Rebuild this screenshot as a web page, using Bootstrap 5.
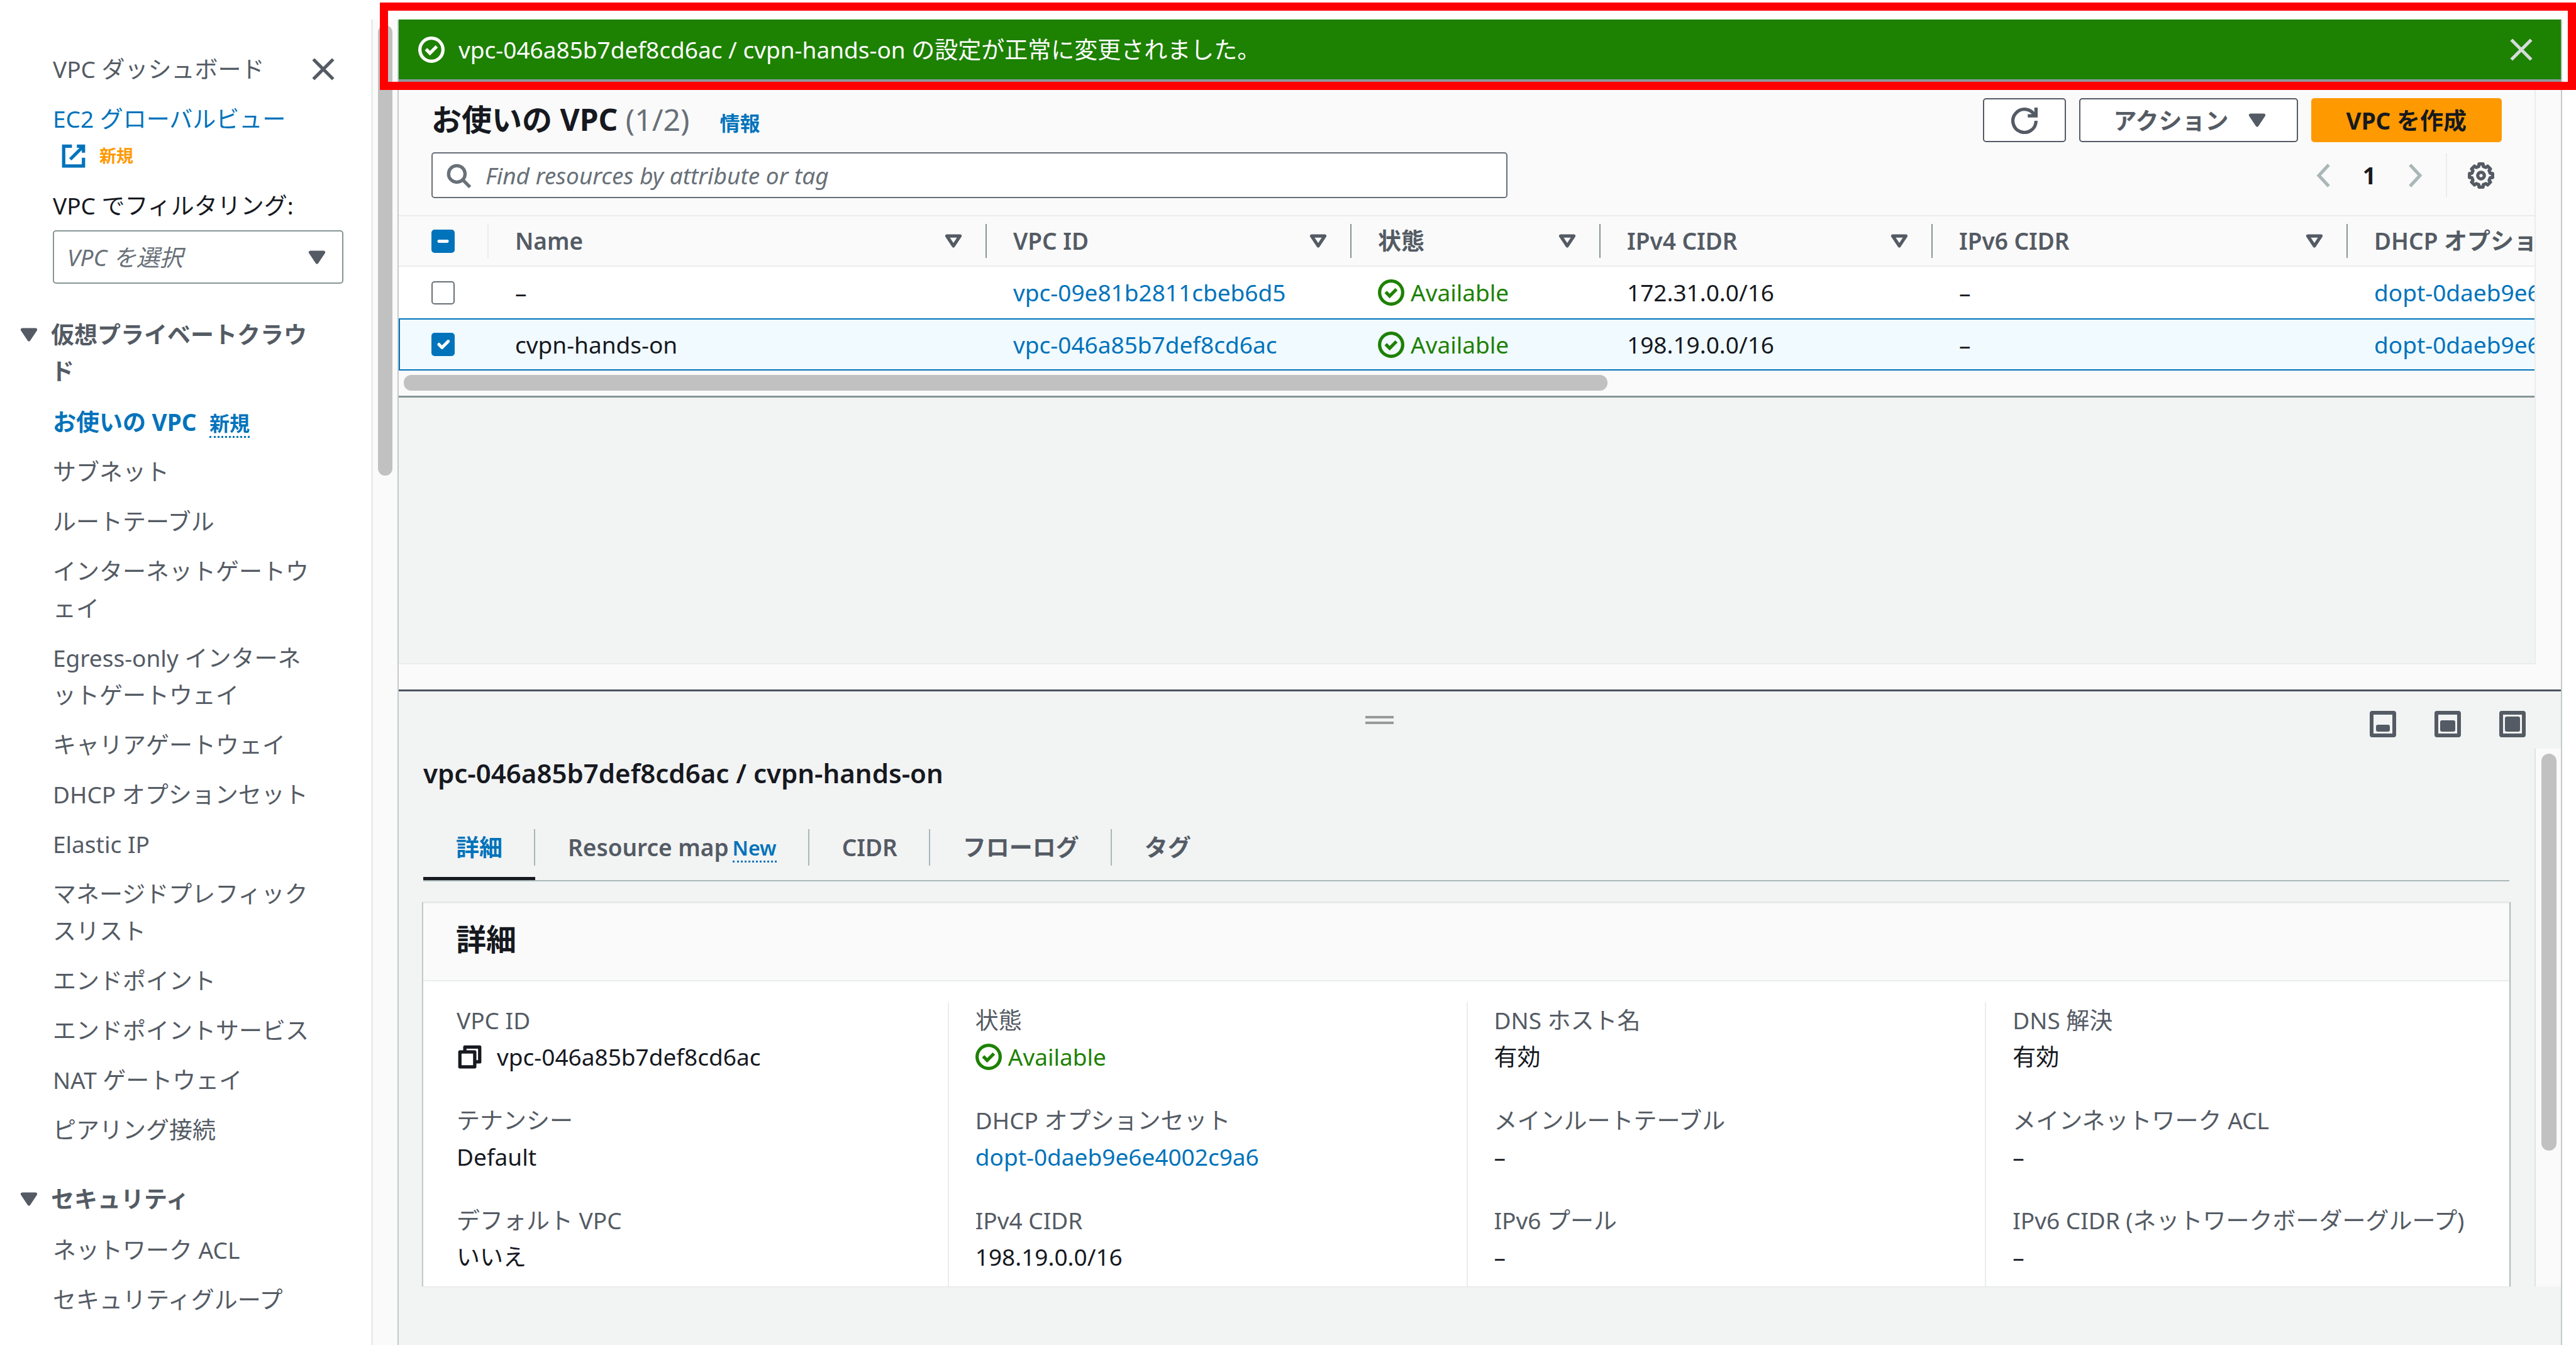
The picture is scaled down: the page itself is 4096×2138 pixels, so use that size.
<!DOCTYPE html>
<html lang="ja">
<head>
<meta charset="utf-8">
<meta name="viewport" content="width=device-width, initial-scale=1">
<title>VPC コンソール</title>
<link rel="stylesheet" href="https://cdn.jsdelivr.net/npm/bootstrap@5.3.0/dist/css/bootstrap.min.css">
<style>
:root{--ink:#16191f;--soft:#545b64;--mute:#687078;--link:#0073bb;--ok:#1d8102;--pane:#fafafa;--canvas:#f2f3f3;--hair:#eaeded;--edge:#aab7b8}
body{height:100vh;overflow:hidden;background:#fff;color:var(--ink);font-family:"Noto Sans","Noto Sans CJK JP",sans-serif;font-size:37px;line-height:58px;line-break:normal}
a{color:var(--link);text-decoration:none}
.ico{width:42px;height:42px;flex:none;fill:none;stroke:currentColor;stroke-width:2}
.ico .solid{fill:currentColor}
.bare{border:0;background:none;padding:0;color:var(--soft);line-height:1;display:flex}
.bar-thumb{background:#c1c1c1;border-radius:12px}
.workspace{padding-top:31px}

/* navigation */
.side{width:590px;padding:50px 44px 0 84px;color:var(--soft)}
.side-top{margin-bottom:20px}
.side-top .bare{margin-right:11px}
.side ul{list-style:none;margin:0;padding:0 36px 0 0}
.side li{line-height:59px;margin-bottom:20px}
.side li a{color:var(--soft)}
.side .here a{color:var(--link);font-weight:700}
.side .ext{color:var(--link);display:block;line-height:59px}
.ext-note{line-height:59px;margin-bottom:20px;padding-left:12px;gap:20px}
.ext-note .ico{color:var(--link)}
.side h2{font-size:37px;line-height:58px;font-weight:700;margin:52px 0 22px -59px;padding-right:36px;gap:14px}
.tag-new{font-size:32px;font-weight:600;color:var(--link);border-bottom:3px dotted var(--link);line-height:40px;display:inline-block}
.side .tag-new{margin-left:11px}
.tag-orange{font-size:27px;font-weight:700;color:#ff9900}
.pick-label{color:var(--ink);display:block;line-height:59px;margin-bottom:10px}
.picker{height:85px;border:2px solid #879596;border-radius:5px;font-size:37px;font-style:italic;color:var(--mute);padding:0 60px 0 21px;background-size:42px;background-position:right 19px center;background-image:url("data:image/svg+xml,%3Csvg xmlns='http://www.w3.org/2000/svg' viewBox='0 0 16 16'%3E%3Cpath d='M4 5h8l-4 6z' fill='%23545b64' stroke='%23545b64' stroke-width='2' stroke-linejoin='round'/%3E%3C/svg%3E")}
.side-track{width:42px;background:var(--pane);border-left:3px solid var(--hair);padding:9px 8px 0 8px}
.side-track .bar-thumb{height:716px}

/* main column */
.stage{margin-right:22px;border:solid #c3cacb;border-width:0 2px;min-width:0}
.flash{background:var(--ok);color:#fff;height:95px;padding:0 42px 0 31px;gap:22px;box-shadow:0 4px 1px #8d9a9f;z-index:1}
.flash .bare{color:#d5dbdb}
.callout-frame{position:absolute;left:604px;right:0;top:4px;height:139px;border:13px solid #f00;pointer-events:none;z-index:5}
.upper{background:var(--pane);padding-bottom:40px}
.listing{border-right:2px solid var(--hair);border-bottom:2px solid var(--hair);background:var(--canvas);min-width:0}
.gutter{width:40px}
.list-head{background:var(--pane);padding:30px 52px 27px 52px}
.list-head h1{font-size:48px;line-height:68px;font-weight:700;margin:0}
.list-head h1 span{font-weight:400;color:var(--mute)}
.info{font-size:32px;font-weight:700}
.actions{gap:21px}
.act{height:70px;border:2px solid var(--soft);border-radius:5px;background:#fff;color:var(--soft);font-weight:700;font-size:37px;line-height:1;padding:0 52px}
.act.menu-act{padding-right:42px}
.act.main-act{background:#ff9900;border-color:#ff9900;color:var(--ink);padding:0 54px}
.act.icon-act{padding:0 43px}
.finder{width:1711px;height:73px;border:2px solid var(--mute);border-radius:5px;background:#fff;padding-left:20px;gap:22px;color:var(--mute)}
.finder input{border:0;padding:0;font-size:37px;line-height:58px;background:none;box-shadow:none!important}
.finder input::placeholder{color:var(--mute);font-style:italic;opacity:1}
.pager{padding-right:12px}
.page-no{padding:0 41px}
.pager .vline{width:2px;height:70px;background:var(--hair);margin:0 33px 0 28px}
.pager .off{color:var(--edge)}

.grid-wrap{overflow:hidden;background:#fff}
.vpcs{table-layout:fixed;width:6000px;border-collapse:separate;border-spacing:0;margin:0}
.vpcs th{height:82px;padding:0;background:var(--pane);border:solid var(--hair);border-width:2px 0;color:var(--soft);font-weight:600}
.vpcs th>div{height:54px;border-right:2px solid #879596;padding:0 30px 0 42px}
.vpcs th:first-child>div{border-color:var(--hair);padding-left:52px}
.vpcs td{height:82px;padding:0 42px;white-space:nowrap;vertical-align:middle}
.vpcs td:first-child{padding-left:52px}
.vpcs tr.picked td{height:83px;background:#f1faff;border:solid var(--link);border-width:2px 0}
.vpcs tr.picked td:first-child{border-left-width:2px;padding-left:50px}
.tick{width:37px;height:37px;margin:0;border:2px solid var(--mute);border-radius:5px!important;display:block;float:none}
.vpcs .tick:checked,.vpcs .tick:indeterminate{background-color:var(--link);border-color:var(--link)}
.ok-state{color:var(--ok);gap:10px}
.h-track{background:var(--pane);height:43px;border-bottom:3px solid #879596;padding:7px 8px 0}
.h-track .bar-thumb{width:1914px;height:25px}

/* split panel */
.split{background:var(--canvas);border-top:3px solid #4a525c;padding-bottom:93px}
.grip{width:45px;height:13px;border:solid #999;border-width:4px 0}
.panel-bar{height:91px;padding-right:56px}
.panel-sizes{gap:61px;padding:12px 0 0 16px}
.detail-pane{padding:10px 40px 0 39px;min-width:0;border-right:2px solid #e0e3e3}
.detail-pane h2{font-size:42px;line-height:58px;font-weight:600;margin:0 0 60px}
.detail-tabs{border-bottom:2px solid var(--edge)}
.detail-tabs button{border:0;background:none;color:var(--soft);font-weight:600;padding:0 0 23px;line-height:58px}
.detail-tabs .cell{display:flex;gap:6px;align-items:center;height:58px;padding:0 50px 0 52px;border-right:2px solid var(--edge)}
.detail-tabs li:last-child .cell{border:0}
.detail-tabs .tag-new{margin-top:5px}
.detail-tabs .active{color:var(--link);font-weight:700;border-bottom:5px solid var(--ink);padding-bottom:18px}
.sheet{margin-top:33px;background:#fff;box-shadow:-2px 0 1px #c3cacb,2px 0 1px #b4bebf}
.sheet-top{background:var(--pane);border-top:2px solid var(--hair);border-bottom:2px solid var(--hair);padding:28px 52px 36px}
.sheet-top h3{font-size:48px;line-height:58px;font-weight:700;margin:0}
.facts{padding:33px 9px 0}
.facts dl{margin:0;padding:0 42px 18px;border-left:2px solid var(--hair)}
.facts .col:first-child dl{border-color:transparent}
.facts dt{font-weight:400;color:var(--soft)}
.facts dd{margin:0 0 43px;min-height:58px}
.facts dd:last-child{margin:0}
.copy-line{gap:22px}
.copy-line .bare{color:var(--ink)}
.detail-track{width:40px;background:var(--pane);padding:8px 7px 0 9px}
.detail-track .bar-thumb{height:631px}
</style>
</head>
<body>
<div class="workspace d-flex h-100 position-relative">
  <nav class="side flex-shrink-0" aria-label="VPC">
    <div class="side-top d-flex justify-content-between align-items-center">
      <a href="#" class="text-reset">VPC ダッシュボード</a>
      <button class="bare" type="button" aria-label="閉じる"><svg class="ico" viewBox="0 0 16 16"><path d="m2 2 12 12M14 2 2 14"/></svg></button>
    </div>
    <a href="#" class="ext">EC2 グローバルビュー</a>
    <div class="ext-note d-flex align-items-center"><svg class="ico" viewBox="0 0 16 16"><path d="M10 2h4v4M6 10l8-8M14 9v5H2V2h5"/></svg><span class="tag-orange">新規</span></div>
    <label for="vpc-filter" class="pick-label">VPC でフィルタリング:</label>
    <select id="vpc-filter" class="form-select picker"><option>VPC を選択</option></select>
    <h2 class="d-flex"><svg class="ico mt-2" viewBox="0 0 16 16" stroke-linejoin="round"><path class="solid" d="M4 5h8l-4 6z"/></svg><span>仮想プライベートクラウド</span></h2>
    <ul>
      <li class="here"><a href="#">お使いの VPC</a> <span class="tag-new">新規</span></li>
      <li><a href="#">サブネット</a></li>
      <li><a href="#">ルートテーブル</a></li>
      <li><a href="#">インターネットゲートウェイ</a></li>
      <li><a href="#">Egress-only インターネットゲートウェイ</a></li>
      <li><a href="#">キャリアゲートウェイ</a></li>
      <li><a href="#">DHCP オプションセット</a></li>
      <li><a href="#">Elastic IP</a></li>
      <li><a href="#">マネージドプレフィックスリスト</a></li>
      <li><a href="#">エンドポイント</a></li>
      <li><a href="#">エンドポイントサービス</a></li>
      <li><a href="#">NAT ゲートウェイ</a></li>
      <li><a href="#">ピアリング接続</a></li>
    </ul>
    <h2 class="d-flex"><svg class="ico mt-2" viewBox="0 0 16 16" stroke-linejoin="round"><path class="solid" d="M4 5h8l-4 6z"/></svg><span>セキュリティ</span></h2>
    <ul>
      <li><a href="#">ネットワーク ACL</a></li>
      <li><a href="#">セキュリティグループ</a></li>
    </ul>
  </nav>
  <div class="side-track flex-shrink-0"><div class="bar-thumb"></div></div>

  <main class="stage flex-grow-1 d-flex flex-column">
    <div class="flash d-flex align-items-center position-relative flex-shrink-0" role="status">
      <svg class="ico" viewBox="0 0 16 16"><circle cx="8" cy="8" r="7"/><path d="m4.700 7.700 2.400 2.400L11.200 6"/></svg>
      <span class="flex-grow-1">vpc-046a85b7def8cd6ac / cvpn-hands-on の設定が正常に変更されました。</span>
      <button class="bare" type="button" aria-label="閉じる"><svg class="ico" viewBox="0 0 16 16"><path d="m2 2 12 12M14 2 2 14"/></svg></button>
    </div>

    <div class="upper d-flex flex-grow-1">
      <section class="listing flex-grow-1 d-flex flex-column">
        <div class="list-head">
          <div class="d-flex justify-content-between mb-3">
            <div class="d-flex align-items-baseline"><h1>お使いの VPC <span>(1/2)</span></h1><a href="#" class="info ms-5">情報</a></div>
            <div class="d-flex actions">
              <button class="act icon-act" type="button" aria-label="更新"><svg class="ico" viewBox="0 0 16 16"><path d="M10 5h5V0M15 8a7 7 0 1 1-.7-3"/></svg></button>
              <button class="act menu-act d-flex align-items-center" type="button">アクション<svg class="ico ms-4" viewBox="0 0 16 16" stroke-linejoin="round"><path class="solid" d="M4 5h8l-4 6z"/></svg></button>
              <button class="act main-act" type="button">VPC を作成</button>
            </div>
          </div>
          <div class="d-flex justify-content-between align-items-center">
            <div class="finder d-flex align-items-center">
              <svg class="ico" viewBox="0 0 16 16"><circle cx="7" cy="7" r="5"/><path d="m15 15-4.500-4.500"/></svg>
              <input type="text" class="form-control" aria-label="検索" placeholder="Find resources by attribute or tag">
            </div>
            <div class="pager d-flex align-items-center">
              <button class="bare off" type="button" aria-label="前へ"><svg class="ico" viewBox="0 0 16 16"><path d="m11 1.500-6 6.500 6 6.500"/></svg></button>
              <b class="page-no">1</b>
              <button class="bare off" type="button" aria-label="次へ"><svg class="ico" viewBox="0 0 16 16"><path d="m5 1.500 6 6.500-6 6.500"/></svg></button>
              <span class="vline"></span>
              <button class="bare" type="button" aria-label="設定"><svg class="ico" viewBox="0 0 16 16" stroke-linejoin="round"><circle cx="8" cy="8" r="2"/><path d="M13.500 9.400 12.900 10.900 13.700 12 12 13.700 10.900 12.900 9.400 13.500 9.200 15 6.800 15 6.600 13.500 5.100 12.900 4 13.700 2.300 12 3.100 10.900 2.500 9.400 1 9.200 1 6.800 2.500 6.600 3.100 5.100 2.300 4 4 2.300 5.100 3.100 6.600 2.500 6.800 1 9.200 1 9.400 2.500 10.900 3.100 12 2.300 13.700 4 12.900 5.100 13.500 6.600 15 6.800 15 9.200z"/></svg></button>
            </div>
          </div>
        </div>
        <div class="grid-wrap">
          <table class="vpcs">
            <colgroup><col width="143"><col width="792"><col width="580"><col width="396"><col width="528"><col width="660"><col></colgroup>
            <thead>
              <tr>
                <th><div class="d-flex align-items-center"><input class="form-check-input tick" type="checkbox" id="pick-all" aria-label="すべて選択"></div></th>
                <th><div class="d-flex align-items-center justify-content-between">Name<svg class="ico" viewBox="0 0 16 16" stroke-linejoin="round"><path d="M4 5h8l-4 6z"/></svg></div></th>
                <th><div class="d-flex align-items-center justify-content-between">VPC ID<svg class="ico" viewBox="0 0 16 16" stroke-linejoin="round"><path d="M4 5h8l-4 6z"/></svg></div></th>
                <th><div class="d-flex align-items-center justify-content-between">状態<svg class="ico" viewBox="0 0 16 16" stroke-linejoin="round"><path d="M4 5h8l-4 6z"/></svg></div></th>
                <th><div class="d-flex align-items-center justify-content-between">IPv4 CIDR<svg class="ico" viewBox="0 0 16 16" stroke-linejoin="round"><path d="M4 5h8l-4 6z"/></svg></div></th>
                <th><div class="d-flex align-items-center justify-content-between">IPv6 CIDR<svg class="ico" viewBox="0 0 16 16" stroke-linejoin="round"><path d="M4 5h8l-4 6z"/></svg></div></th>
                <th><div class="d-flex align-items-center">DHCP オプション</div></th>
              </tr>
            </thead>
            <tbody>
              <tr>
                <td><input class="form-check-input tick" type="checkbox" aria-label="vpc-09e81b2811cbeb6d5"></td>
                <td>–</td>
                <td><a href="#">vpc-09e81b2811cbeb6d5</a></td>
                <td><span class="ok-state d-flex align-items-center"><svg class="ico" viewBox="0 0 16 16"><circle cx="8" cy="8" r="7"/><path d="m4.700 7.700 2.400 2.400L11.200 6"/></svg>Available</span></td>
                <td>172.31.0.0/16</td>
                <td>–</td>
                <td><a href="#">dopt-0daeb9e6e4002c9a6</a></td>
              </tr>
              <tr class="picked">
                <td><input class="form-check-input tick" type="checkbox" checked aria-label="vpc-046a85b7def8cd6ac"></td>
                <td>cvpn-hands-on</td>
                <td><a href="#">vpc-046a85b7def8cd6ac</a></td>
                <td><span class="ok-state d-flex align-items-center"><svg class="ico" viewBox="0 0 16 16"><circle cx="8" cy="8" r="7"/><path d="m4.700 7.700 2.400 2.400L11.200 6"/></svg>Available</span></td>
                <td>198.19.0.0/16</td>
                <td>–</td>
                <td><a href="#">dopt-0daeb9e6e4002c9a6</a></td>
              </tr>
            </tbody>
          </table>
        </div>
        <div class="h-track"><div class="bar-thumb"></div></div>
      </section>
      <div class="gutter flex-shrink-0"></div>
    </div>

    <section class="split flex-shrink-0">
      <div class="panel-bar d-flex align-items-center">
        <div class="flex-grow-1 d-flex justify-content-center"><div class="grip"></div></div>
        <div class="panel-sizes d-flex">
          <button class="bare" type="button" aria-label="最小化"><svg class="ico" viewBox="0 0 42 42"><rect x="3" y="3" width="36" height="36" rx="1" stroke-width="6"/><rect class="solid" x="10" y="22" width="22" height="11" rx="3" stroke="none"/></svg></button>
          <button class="bare" type="button" aria-label="中サイズ"><svg class="ico" viewBox="0 0 42 42"><rect x="3" y="3" width="36" height="36" rx="1" stroke-width="6"/><rect class="solid" x="9" y="15" width="24" height="18" rx="3" stroke="none"/></svg></button>
          <button class="bare" type="button" aria-label="最大化"><svg class="ico" viewBox="0 0 42 42"><rect x="3" y="3" width="36" height="36" rx="1" stroke-width="6"/><rect class="solid" x="9" y="9" width="24" height="24" rx="3" stroke="none"/></svg></button>
        </div>
      </div>
      <div class="d-flex">
        <div class="detail-pane flex-grow-1">
          <h2>vpc-046a85b7def8cd6ac / cvpn-hands-on</h2>
          <ul class="nav detail-tabs" role="tablist">
            <li><button class="active" type="button" role="tab" aria-selected="true"><span class="cell">詳細</span></button></li>
            <li><button type="button" role="tab"><span class="cell">Resource map<span class="tag-new">New</span></span></button></li>
            <li><button type="button" role="tab"><span class="cell">CIDR</span></button></li>
            <li><button type="button" role="tab"><span class="cell">フローログ</span></button></li>
            <li><button type="button" role="tab"><span class="cell">タグ</span></button></li>
          </ul>
          <div class="sheet">
            <div class="sheet-top"><h3>詳細</h3></div>
            <div class="facts row gx-0 m-0">
              <div class="col"><dl>
                <dt>VPC ID</dt><dd class="d-flex align-items-center copy-line"><button class="bare" type="button" aria-label="コピー"><svg class="ico" viewBox="0 0 16 16" stroke-linejoin="round"><path d="M2 5h9v9H2zM5 5V2h9v9h-3"/></svg></button>vpc-046a85b7def8cd6ac</dd>
                <dt>テナンシー</dt><dd>Default</dd>
                <dt>デフォルト VPC</dt><dd>いいえ</dd>
              </dl></div>
              <div class="col"><dl>
                <dt>状態</dt><dd class="ok-state d-flex align-items-center"><svg class="ico" viewBox="0 0 16 16"><circle cx="8" cy="8" r="7"/><path d="m4.700 7.700 2.400 2.400L11.200 6"/></svg>Available</dd>
                <dt>DHCP オプションセット</dt><dd><a href="#">dopt-0daeb9e6e4002c9a6</a></dd>
                <dt>IPv4 CIDR</dt><dd>198.19.0.0/16</dd>
              </dl></div>
              <div class="col"><dl>
                <dt>DNS ホスト名</dt><dd>有効</dd>
                <dt>メインルートテーブル</dt><dd>–</dd>
                <dt>IPv6 プール</dt><dd>–</dd>
              </dl></div>
              <div class="col"><dl>
                <dt>DNS 解決</dt><dd>有効</dd>
                <dt>メインネットワーク ACL</dt><dd>–</dd>
                <dt>IPv6 CIDR (ネットワークボーダーグループ)</dt><dd>–</dd>
              </dl></div>
            </div>
          </div>
        </div>
        <div class="detail-track flex-shrink-0"><div class="bar-thumb"></div></div>
      </div>
    </section>
  </main>
  <div class="callout-frame"></div>
</div>
<script src="https://cdn.jsdelivr.net/npm/bootstrap@5.3.0/dist/js/bootstrap.bundle.min.js"></script>
<script>document.getElementById('pick-all').indeterminate = true;</script>
</body>
</html>
